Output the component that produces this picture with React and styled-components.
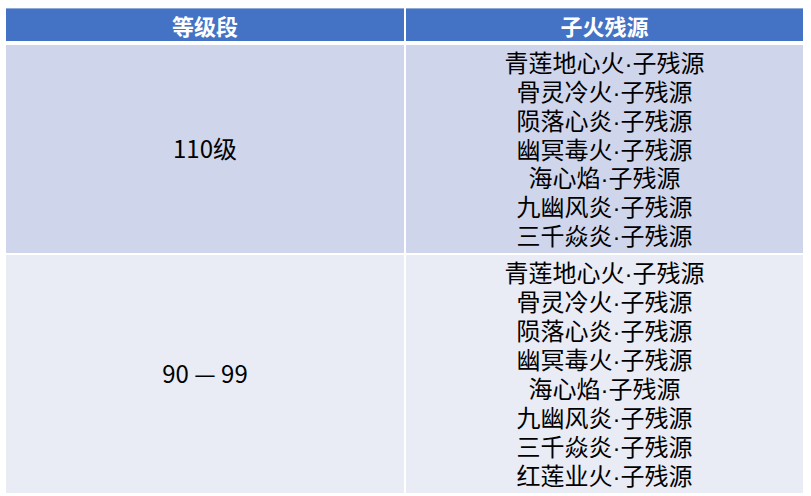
import React from "react";
import styled, { createGlobalStyle } from "styled-components";

const GlobalStyle = createGlobalStyle`
  body {
    margin: 0;
    background: #ffffff;
    font-family: "Microsoft YaHei", "Noto Sans CJK SC", "Noto Sans", sans-serif;
  }
`;

const fires = [
  "青莲地心火",
  "骨灵冷火",
  "陨落心炎",
  "幽冥毒火",
  "海心焰",
  "九幽风炎",
  "三千焱炎",
];

const rows = [
  { level: "110级", items: fires, height: 208 },
  { level: "90 — 99", items: [...fires, "红莲业火"], height: 238 },
];

const App = () => {
  return (
    <>
      <GlobalStyle />
      <Page>
        <Table>
          <HeadCell>等级段</HeadCell>
          <HeadCell>子火残源</HeadCell>

          {rows.map((row, i) => (
            <React.Fragment key={row.level}>
              <BodyCell $odd={i % 2 === 0} $height={row.height}>
                <Level>{row.level}</Level>
              </BodyCell>
              <BodyCell $odd={i % 2 === 0} $height={row.height}>
                <List>
                  {row.items.map((name) => (
                    <Line key={name}>
                      {name}
                      <Dot>·</Dot>子残源
                    </Line>
                  ))}
                </List>
              </BodyCell>
            </React.Fragment>
          ))}
        </Table>
      </Page>
    </>
  );
};

const Page = styled.div`
  padding: 8px 8px 0 6px;
`;

const Table = styled.div`
  display: grid;
  grid-template-columns: 398px 397px;
  column-gap: 2px;
  row-gap: 2px;
  background: #ffffff;
`;

const HeadCell = styled.div`
  height: 33px;
  margin-bottom: 2px;
  display: flex;
  align-items: center;
  justify-content: center;
  background: #4472c4;
  border-top: 1px solid #8eaadb;
  box-sizing: border-box;
  color: #ffffff;
  font-size: 22px;
  font-weight: 700;
`;

const BodyCell = styled.div`
  height: ${(p) => p.$height}px;
  overflow: hidden;
  display: flex;
  align-items: center;
  justify-content: center;
  background: ${(p) => (p.$odd ? "#cfd5ea" : "#e9ebf5")};
  color: #000000;
  font-size: 24px;
`;

const Level = styled.span`
  line-height: 1;
  margin-top: -2px;
`;

const List = styled.div`
  display: flex;
  flex-direction: column;
  align-items: center;
`;

const Line = styled.div`
  height: 28.9px;
  line-height: 28.9px;
  white-space: nowrap;
`;

const Dot = styled.span`
  font-family: "Liberation Sans", sans-serif;
  line-height: 0;
`;

export default App;
